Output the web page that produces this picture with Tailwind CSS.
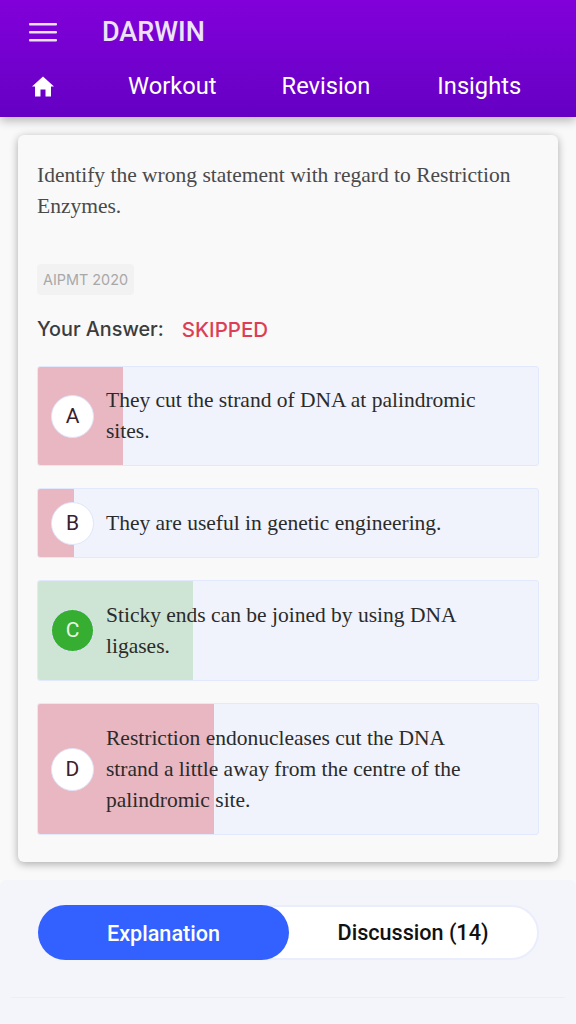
<!DOCTYPE html>
<html lang="en">
<head>
    <meta charset="UTF-8">
    <meta name="viewport" content="width=device-width, initial-scale=1.0">
    <title>Darwin</title>
    <script src="https://cdn.jsdelivr.net/npm/@tailwindcss/browser@4"></script>
</head>
<body class="bg-[#f9f9f9] font-['Roboto',sans-serif] w-[576px] h-[1024px] overflow-hidden">
    <!-- header -->
    <header class="relative z-10 h-[117px] bg-gradient-to-b from-[#8200da] to-[#6500c3] shadow-[0_3px_10px_rgba(0,0,0,0.3)]">
        <div class="flex items-center h-[63px] pl-[29px]">
            <svg class="w-[28px] h-[20px]" viewBox="0 0 28 20" fill="#ece4f6">
                <rect x="0" y="1" width="28" height="2.6" rx="1"/>
                <rect x="0" y="9" width="28" height="2.6" rx="1"/>
                <rect x="0" y="17" width="28" height="2.6" rx="1"/>
            </svg>
            <span class="ml-[45px] pt-[1px] text-[27px] font-medium text-[#ece4f6]">DARWIN</span>
        </div>
        <nav class="flex items-center h-[46px] relative pt-[1px] text-[23.7px] text-white">
            <svg class="ml-[32px] w-[22px] h-[21px]" viewBox="0 0 22 20" fill="#fff">
                <path d="M11 0 L22 10 H19 V20 H13.5 V13 H8.5 V20 H3 V10 H0 Z"/>
            </svg>
            <span class="ml-[74px]">Workout</span>
            <span class="ml-[65px]">Revision</span>
            <span class="ml-[67px]">Insights</span>
        </nav>
    </header>

    <!-- question card -->
    <main class="mx-[18px] mt-[18px] h-[727px] rounded-md bg-[#f9f9f9] px-[19px] pt-[25px] shadow-[0_2px_9px_rgba(0,0,0,0.32)]">
        <p class="font-['Liberation_Serif',serif] text-[21.5px] leading-[31px] text-[#4a4a4a]">Identify the wrong statement with regard to Restriction Enzymes.</p>
        <span class="inline-block mt-[42px] h-[31px] rounded-sm bg-[#f2f2f2] px-[6px] font-['Inter',sans-serif] text-[14.4px] leading-[31px] text-[#a8a8a8]">AIPMT 2020</span>
        <div class="mt-[17px] flex font-['Inter',sans-serif] text-[19.8px] leading-[35px] font-medium">
            <span class="text-[#3c3c3c]">Your Answer:</span>
            <span class="ml-[18px] text-[20.5px] text-[#dc3f55]">SKIPPED</span>
        </div>

        <div class="mt-[19px] flex flex-col gap-[22px] font-['Liberation_Serif',serif] text-[21.5px] leading-[31px] text-[#2b2b2b]">
            <div class="relative flex items-center h-[100px] overflow-hidden rounded-[3px] border border-[#e3e9fc] bg-[#f0f3fb] pl-[13px]">
                <div class="absolute left-0 top-0 bottom-0 w-[85px] bg-[#e9b7c2]"></div>
                <span class="relative flex-none flex items-center justify-center w-[43px] h-[43px] rounded-full border border-[#dfe4fa] bg-white font-['Roboto',sans-serif] text-[21px] text-[#38202c]">A</span>
                <p class="relative ml-[12px] w-[390px]">They cut the strand of DNA at palindromic sites.</p>
            </div>
            <div class="relative flex items-center h-[70px] overflow-hidden rounded-[3px] border border-[#e3e9fc] bg-[#f0f3fb] pl-[13px]">
                <div class="absolute left-0 top-0 bottom-0 w-[36px] bg-[#e9b7c2]"></div>
                <span class="relative flex-none flex items-center justify-center w-[43px] h-[43px] rounded-full border border-[#dfe4fa] bg-white font-['Roboto',sans-serif] text-[21px] text-[#38202c]">B</span>
                <p class="relative ml-[12px] w-[390px]">They are useful in genetic engineering.</p>
            </div>
            <div class="relative flex items-center h-[101px] overflow-hidden rounded-[3px] border border-[#e3e9fc] bg-[#f0f3fb] pl-[13px]">
                <div class="absolute left-0 top-0 bottom-0 w-[155px] bg-[#cee5d6]"></div>
                <span class="relative flex-none flex items-center justify-center w-[43px] h-[43px] rounded-full border border-[#dfe4fa] bg-[#35ae32] font-['Roboto',sans-serif] text-[21px] text-[#e8f5e6]">C</span>
                <p class="relative ml-[12px] w-[390px]">Sticky ends can be joined by using DNA ligases.</p>
            </div>
            <div class="relative flex items-center h-[132px] overflow-hidden rounded-[3px] border border-[#e3e9fc] bg-[#f0f3fb] pl-[13px]">
                <div class="absolute left-0 top-0 bottom-0 w-[176px] bg-[#e9b7c2]"></div>
                <span class="relative flex-none flex items-center justify-center w-[43px] h-[43px] rounded-full border border-[#dfe4fa] bg-white font-['Roboto',sans-serif] text-[21px] text-[#38202c]">D</span>
                <p class="relative ml-[12px] w-[375px]">Restriction endonucleases cut the DNA strand a little away from the centre of the palindromic site.</p>
            </div>
        </div>
    </main>

    <!-- explanation / discussion -->
    <section class="mt-[18px] h-[150px] rounded-t-md bg-[#f3f5fb] pt-[25px]">
        <div class="ml-[38px] mr-[37px] flex h-[55px] rounded-full border-2 border-[#e9edfc] bg-white text-[21.6px]">
            <button class="-m-[2px] h-[55px] w-[251px] rounded-full bg-[#3361ff] pt-[4px] font-medium text-white">Explanation</button>
            <button class="flex-1 pt-[2px] pl-[2px] font-medium text-[#111]">Discussion (14)</button>
        </div>
        <div class="mx-[11px] mt-[37px] h-px bg-[#eceef5]"></div>
    </section>
</body>
</html>
